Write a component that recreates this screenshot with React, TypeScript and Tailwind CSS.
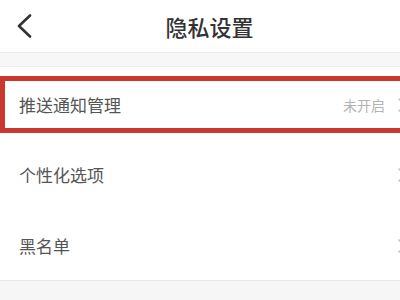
import React from "react";

const font = { fontFamily: '"Noto Sans CJK SC", "Noto Sans", sans-serif' };

function Chevron() {
  return (
    <svg width="8" height="14" viewBox="0 0 8 14" className="shrink-0">
      <path d="M1 1l6 6-6 6" fill="none" stroke="#c4c4c4" strokeWidth="1.6" strokeLinecap="round" strokeLinejoin="round" />
    </svg>
  );
}

export default function App() {
  return (
    <div className="w-[400px] h-[300px] overflow-hidden bg-[#f6f6f6] flex flex-col" style={font}>
      <div className="h-[53px] bg-white flex items-center relative border-b border-[#ececec]">
        <div className="pl-[16px] flex items-center">
          <svg width="16" height="24" viewBox="0 0 16 24">
            <path d="M14 1.5L3 12l11 10.5" fill="none" stroke="#333" strokeWidth="2.6" strokeLinecap="round" strokeLinejoin="round" />
          </svg>
        </div>
        <div className="absolute left-0 right-0 top-0 bottom-0 flex items-center justify-center pointer-events-none">
          <span className="text-[22px] font-medium text-[#333] leading-none pl-[19px]">隐私设置</span>
        </div>
      </div>
      <div className="h-[14px] bg-[#f7f7f7] border-b border-[#efefef]" />
      <div className="bg-white flex flex-col border-b border-[#e6e6e6]">
        <div className="h-[72px] relative flex items-center pl-[19px] pr-0">
          <span className="text-[17px] text-[#555] flex-1 pt-[4px]">推送通知管理</span>
          <span className="text-[14px] text-[#b3b3b3] pt-[4px] mr-[13px]">未开启</span>
          <div className="w-[2px] overflow-hidden flex pt-[4px]"><Chevron /></div>
          <div className="absolute left-0 right-[-10px] top-[9px] h-[57px] border-[5px] border-[#c9372f]" />
        </div>
        <div className="h-[72px] flex items-center pl-[19px]">
          <span className="text-[17px] text-[#555] flex-1">个性化选项</span>
          <div className="w-[2px] overflow-hidden flex"><Chevron /></div>
        </div>
        <div className="h-[69px] flex items-center pl-[19px]">
          <span className="text-[17px] text-[#555] flex-1">黑名单</span>
          <div className="w-[2px] overflow-hidden flex"><Chevron /></div>
        </div>
      </div>
    </div>
  );
}
